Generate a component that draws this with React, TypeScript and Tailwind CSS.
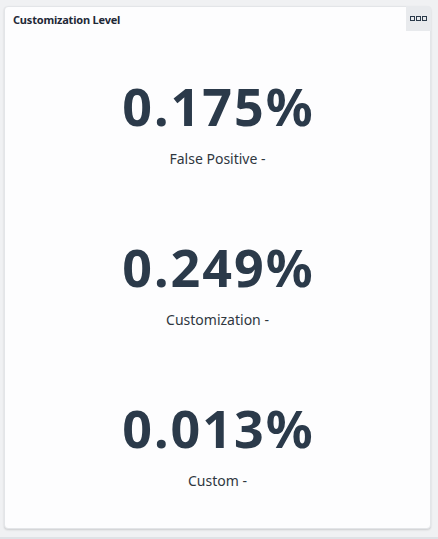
import React from 'react';

const metrics = [
  { value: '0.175%', label: 'False Positive -' },
  { value: '0.249%', label: 'Customization -' },
  { value: '0.013%', label: 'Custom -' },
];

export default function App() {
  return (
    <div
      className="w-[438px] h-[539px] bg-[#f0f1f3] pt-[6px] pl-[4px] pr-[7px] pb-[8px] border-b-2 border-[#dfe2e6]"
      style={{ fontFamily: '"Source Sans Pro", "Noto Sans", sans-serif' }}
    >
      <div className="relative h-full bg-[#fdfdfe] rounded-[4px] border border-[#e3e5e8] shadow-[0_1px_2px_rgba(0,0,0,0.15)] flex flex-col">
        <div className="pt-[5px] pl-[8px]">
          <h3 className="text-[11px] font-bold text-[#1f2937] leading-[16px] tracking-[-0.2px]">
            Customization Level
          </h3>
        </div>
        {/* menu button */}
        <button className="absolute top-[-1px] right-[-1px] w-[25px] h-[25px] bg-[#e8eaed] rounded-tr-[4px] flex items-center justify-center gap-[1px]">
          <span className="w-[5px] h-[5px] border-[1.5px] border-[#2b3a4a]" />
          <span className="w-[5px] h-[5px] border-[1.5px] border-[#2b3a4a]" />
          <span className="w-[5px] h-[5px] border-[1.5px] border-[#2b3a4a]" />
        </button>
        <div className="flex-1 flex flex-col pt-[52px]">
          {metrics.map((m) => (
            <div key={m.label} className="h-[161px] flex flex-col items-center">
              <div className="text-[52px] font-bold text-[#2b3a4a] leading-[52px] tracking-[2px] pl-[2px]">
                {m.value}
              </div>
              <div className="mt-[17px] text-[14px] text-[#2f3740] leading-[20px]">
                {m.label}
              </div>
            </div>
          ))}
        </div>
      </div>
    </div>
  );
}
